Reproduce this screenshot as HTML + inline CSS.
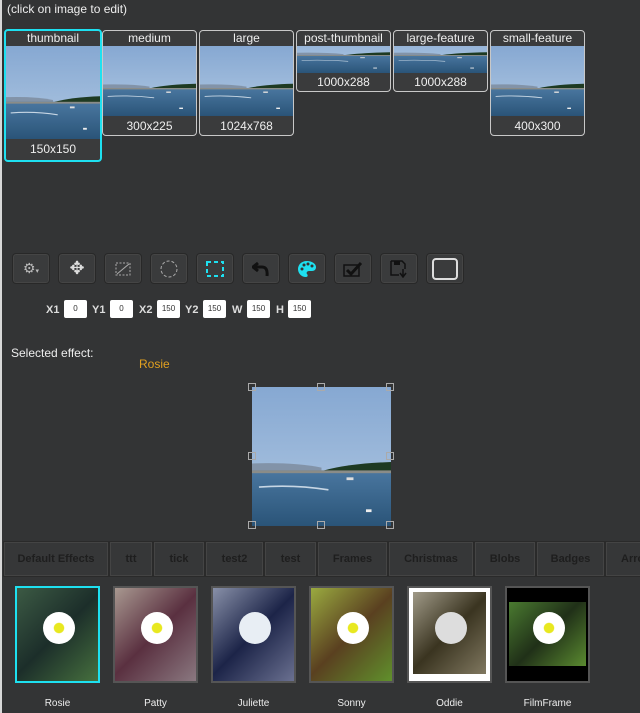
<!DOCTYPE html>
<html><head><style>
body{margin:0;width:640px;height:713px;overflow:hidden;background:#333435;font-family:"Liberation Sans",sans-serif;position:relative}
.a{position:absolute}
.tb{position:absolute;top:30px;border:1px solid #c8c8c8;border-radius:4px;background:#3a3b3c;overflow:hidden;color:#eee;font-size:12px;text-align:center}
.tb .h{height:15px;line-height:14px}
.tb .l{line-height:20px}
.tb svg{display:block}
.btn{position:absolute;top:253px;width:36px;height:29px;background:#3a3b3c;border:1px solid #282828;border-radius:4px;box-shadow:inset 0 0 0 1px #454545;display:flex;align-items:center;justify-content:center}
.lb{position:absolute;top:304px;font-size:11px;color:#ddd;font-weight:bold}
.in{position:absolute;top:300px;height:18px;background:#fff;border-radius:2px;font-size:8px;color:#333;text-align:center;line-height:18px}
.tab{position:absolute;top:541px;height:34px;background:#363738;border:1px solid #2a2a2a;box-shadow:inset 0 0 0 1px #444;color:#1e1e1e;font-weight:bold;font-size:11px;line-height:34px;text-align:center}
.ef{position:absolute;top:586px;width:81px;height:93px;border:2px solid #555}
.el{position:absolute;top:698px;width:85px;text-align:center;font-size:10px;color:#eee}
.hd{position:absolute;width:6px;height:6px;border:1px solid #aaa}
</style></head><body>
<svg width="0" height="0" style="position:absolute"><defs>
<linearGradient id="sky" x1="0" y1="0" x2="0" y2="1"><stop offset="0" stop-color="#86a8d2"/><stop offset="1" stop-color="#b0c8e2"/></linearGradient>
<linearGradient id="sea" x1="0" y1="0" x2="0" y2="1"><stop offset="0" stop-color="#4a77a0"/><stop offset="1" stop-color="#2a5478"/></linearGradient>
<g id="seag"><rect width="100" height="100" fill="url(#sky)"/><path d="M0 55 Q30 54 50 58 L50 62 L0 62Z" fill="#8293a8"/><rect y="60" width="100" height="40" fill="url(#sea)"/><path d="M52 60 Q70 55 100 54 L100 61 L52 61Z" fill="#1e3a22"/><rect y="60" width="100" height="2" fill="#8a8c88"/><path d="M5 72 Q30 70 55 74" stroke="#c7d6e4" stroke-width="1.2" fill="none"/><rect x="68" y="65" width="5" height="2" fill="#ddd"/><rect x="82" y="88" width="4" height="2" fill="#eee"/></g>
<radialGradient id="fl"><stop offset="0" stop-color="#e8e820"/><stop offset=".3" stop-color="#e8e820"/><stop offset=".35" stop-color="#fff"/><stop offset="1" stop-color="#fff"/></radialGradient>
</defs></svg>
<div class="a" style="left:0;top:0;width:2px;height:713px;background:#d8d8d8"></div>
<div class="a" style="left:7px;top:2px;font-size:12px;color:#eee">(click on image to edit)</div>

<div class="tb" style="left:4px;width:94px;height:129px;border:2px solid #1ee0f0;top:29px"><div class="h">thumbnail</div><svg width="94" height="93" viewBox="0 0 100 100" preserveAspectRatio="none"><use href="#seag"/></svg><div class="l">150x150</div></div>
<div class="tb" style="left:102px;width:93px;height:104px"><div class="h">medium</div><svg width="93" height="70" viewBox="0 0 100 100" preserveAspectRatio="none"><use href="#seag"/></svg><div class="l">300x225</div></div>
<div class="tb" style="left:199px;width:93px;height:104px"><div class="h">large</div><svg width="93" height="70" viewBox="0 0 100 100" preserveAspectRatio="none"><use href="#seag"/></svg><div class="l">1024x768</div></div>
<div class="tb" style="left:296px;width:93px;height:60px"><div class="h">post-thumbnail</div><svg width="93" height="27" viewBox="0 40 100 60" preserveAspectRatio="none"><use href="#seag"/></svg><div class="l" style="line-height:18px">1000x288</div></div>
<div class="tb" style="left:393px;width:93px;height:60px"><div class="h">large-feature</div><svg width="93" height="27" viewBox="0 40 100 60" preserveAspectRatio="none"><use href="#seag"/></svg><div class="l" style="line-height:18px">1000x288</div></div>
<div class="tb" style="left:490px;width:93px;height:104px"><div class="h">small-feature</div><svg width="93" height="70" viewBox="0 0 100 100" preserveAspectRatio="none"><use href="#seag"/></svg><div class="l">400x300</div></div>

<div class="btn" style="left:12px"><span style="color:#bbb;font-size:14px">⚙<span style="font-size:7px">▾</span></span></div>
<div class="btn" style="left:58px"><span style="color:#ddd;font-size:18px">✥</span></div>
<div class="btn" style="left:104px"><svg width="16" height="14"><rect x="1" y="1" width="14" height="12" fill="none" stroke="#aaa" stroke-dasharray="2 1.5"/><path d="M2 12L14 2" stroke="#aaa"/></svg></div>
<div class="btn" style="left:150px"><svg width="18" height="18"><circle cx="9" cy="9" r="8" fill="none" stroke="#aaa" stroke-dasharray="3 2"/></svg></div>
<div class="btn" style="left:196px"><svg width="18" height="16"><rect x="1" y="1" width="16" height="14" fill="none" stroke="#1ee0f0" stroke-width="2" stroke-dasharray="4 3"/></svg></div>
<div class="btn" style="left:242px"><svg width="18" height="16"><path d="M6 2L1 6L6 10M1 6H10Q16 6 15 15" stroke="#111" stroke-width="3" fill="none"/></svg></div>
<div class="btn" style="left:288px"><svg width="20" height="18"><path d="M10 1C4 1 1 5 1 9s3 8 8 8c2 0 2-2 1-3s0-3 2-3h3c3 0 4-2 4-4C19 4 15 1 10 1z" fill="#1ee0f0"/><circle cx="5" cy="9" r="1.5" fill="#333"/><circle cx="7" cy="5" r="1.5" fill="#333"/><circle cx="11" cy="4" r="1.5" fill="#333"/><circle cx="15" cy="6" r="1.5" fill="#333"/></svg></div>
<div class="btn" style="left:334px"><svg width="20" height="16"><rect x="1" y="4" width="15" height="11" fill="none" stroke="#111" stroke-width="1.5"/><path d="M4 9L8 13L18 2" stroke="#111" stroke-width="3" fill="none"/></svg></div>
<div class="btn" style="left:380px"><svg width="18" height="18"><path d="M1 1H12L15 4V9M1 1V15H9" stroke="#111" stroke-width="1.5" fill="none"/><rect x="4" y="1" width="6" height="4" fill="#111"/><path d="M13 9V16M10 13L13 17L16 13" stroke="#111" stroke-width="1.5" fill="none"/></svg></div>
<div class="btn" style="left:426px"><div style="width:22px;height:18px;border:2px solid #ddd;border-radius:4px"></div></div>

<div class="lb" style="left:46px">X1</div><div class="in" style="left:64px;width:23px">0</div>
<div class="lb" style="left:92px">Y1</div><div class="in" style="left:110px;width:23px">0</div>
<div class="lb" style="left:139px">X2</div><div class="in" style="left:157px;width:23px">150</div>
<div class="lb" style="left:185px">Y2</div><div class="in" style="left:203px;width:23px">150</div>
<div class="lb" style="left:232px">W</div><div class="in" style="left:247px;width:23px">150</div>
<div class="lb" style="left:276px">H</div><div class="in" style="left:288px;width:23px">150</div>

<div class="a" style="left:11px;top:346px;font-size:12px;color:#eee">Selected effect:</div>
<div class="a" style="left:139px;top:357px;font-size:12px;color:#e0a020">Rosie</div>

<svg class="a" style="left:252px;top:387px" width="139" height="139" viewBox="0 0 100 100" preserveAspectRatio="none"><use href="#seag"/></svg>
<div class="hd" style="left:248px;top:383px"></div><div class="hd" style="left:317px;top:383px"></div><div class="hd" style="left:386px;top:383px"></div>
<div class="hd" style="left:248px;top:452px"></div><div class="hd" style="left:386px;top:452px"></div>
<div class="hd" style="left:248px;top:521px"></div><div class="hd" style="left:317px;top:521px"></div><div class="hd" style="left:386px;top:521px"></div>

<div class="tab" style="left:3px;width:104px">Default Effects</div>
<div class="tab" style="left:109px;width:42px">ttt</div>
<div class="tab" style="left:153px;width:50px">tick</div>
<div class="tab" style="left:205px;width:57px">test2</div>
<div class="tab" style="left:264px;width:51px">test</div>
<div class="tab" style="left:317px;width:69px">Frames</div>
<div class="tab" style="left:388px;width:84px">Christmas</div>
<div class="tab" style="left:474px;width:60px">Blobs</div>
<div class="tab" style="left:536px;width:67px">Badges</div>
<div class="tab" style="left:605px;width:50px;text-align:left;padding-left:15px">Arrows</div>

<div class="ef" style="left:15px;border-color:#1ee0f0;background:linear-gradient(135deg,#3c5a44,#1c2e2a 50%,#46703e)"><svg class="a" style="left:24px;top:22px" width="36" height="36"><circle cx="18" cy="18" r="16" fill="url(#fl)"/></svg></div>
<div class="ef" style="left:113px;background:linear-gradient(135deg,#a89890,#5a3040 50%,#8a7880)"><svg class="a" style="left:24px;top:22px" width="36" height="36"><circle cx="18" cy="18" r="16" fill="url(#fl)"/></svg></div>
<div class="ef" style="left:211px;background:linear-gradient(135deg,#8890a8,#1c2448 50%,#6a7090)"><svg class="a" style="left:24px;top:22px" width="36" height="36"><circle cx="18" cy="18" r="16" fill="#e8eef4"/></svg></div>
<div class="ef" style="left:309px;background:linear-gradient(135deg,#9aaa40,#5a4020 50%,#60902c)"><svg class="a" style="left:24px;top:22px" width="36" height="36"><circle cx="18" cy="18" r="16" fill="url(#fl)"/></svg></div>
<div class="ef" style="left:407px;background:#fff"><div class="a" style="left:4px;top:4px;width:73px;height:82px;background:linear-gradient(135deg,#a09a88,#3a3420 50%,#807860)"></div><svg class="a" style="left:24px;top:22px" width="36" height="36"><circle cx="18" cy="18" r="16" fill="#ddd"/></svg></div>
<div class="ef" style="left:505px;background:#000"><div class="a" style="left:2px;top:14px;width:77px;height:64px;background:linear-gradient(135deg,#4a7a30,#203018 50%,#5a8a30)"></div><svg class="a" style="left:24px;top:22px" width="36" height="36"><circle cx="18" cy="18" r="16" fill="url(#fl)"/></svg></div>

<div class="el" style="left:15px">Rosie</div>
<div class="el" style="left:113px">Patty</div>
<div class="el" style="left:211px">Juliette</div>
<div class="el" style="left:309px">Sonny</div>
<div class="el" style="left:407px">Oddie</div>
<div class="el" style="left:505px">FilmFrame</div>
</body></html>
